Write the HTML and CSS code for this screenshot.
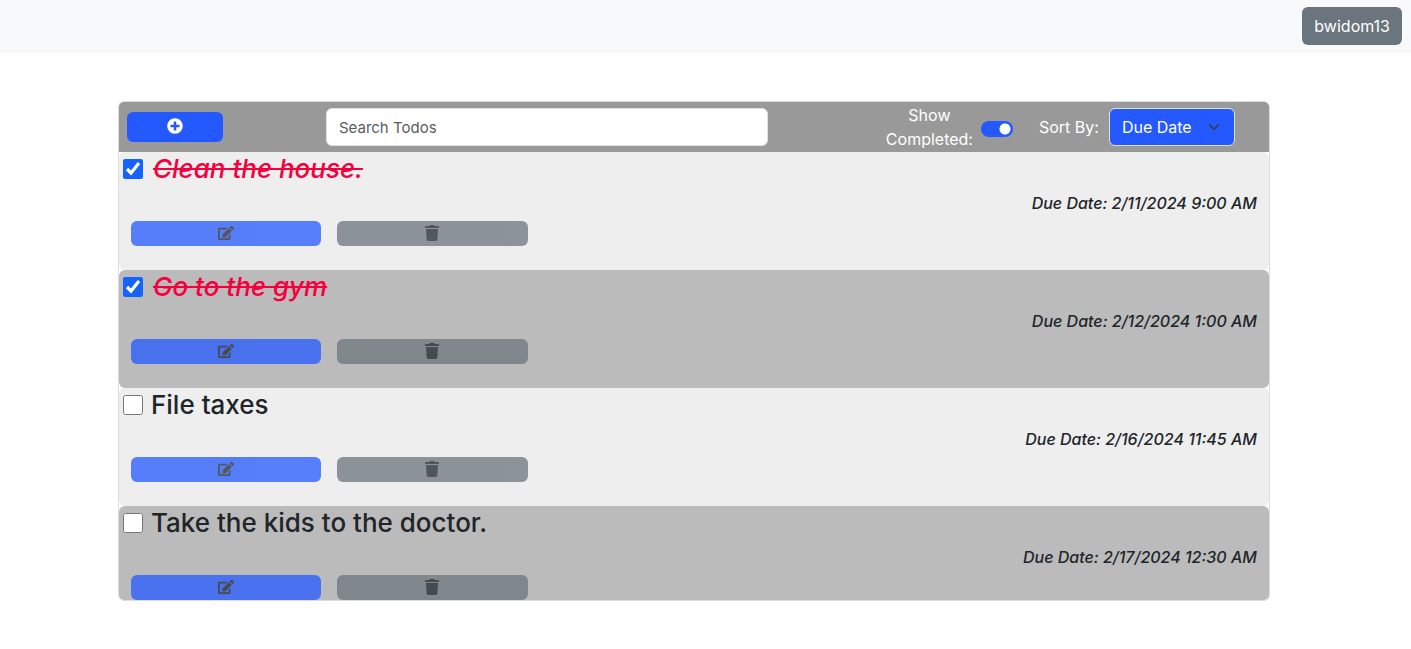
FILE: index.html
```
<!DOCTYPE html>
<html lang="en">
<head>
<meta charset="utf-8">
<meta name="viewport" content="width=device-width, initial-scale=1">
<title>Todos</title>
<link rel="stylesheet" href="styles.css">
</head>
<body>
<svg class="sprite" aria-hidden="true">
  <symbol id="icon-edit" viewBox="0 0 576 512"><path d="M402.600 83.200l90.200 90.200c3.800 3.800 3.800 10 0 13.800L274.400 405.600l-92.800 10.300c-12.400 1.400-22.900-9.100-21.500-21.500l10.300-92.800L388.800 83.200c3.800-3.800 10-3.800 13.800 0zm162-22.900l-48.800-48.800c-15.200-15.200-39.900-15.200-55.200 0l-35.400 35.400c-3.800 3.800-3.800 10 0 13.800l90.200 90.200c3.800 3.800 10 3.800 13.800 0l35.400-35.400c15.200-15.300 15.200-40 0-55.200zM384 346.200V448H64V128h229.800c3.200 0 6.200-1.300 8.500-3.500l40-40c7.600-7.600 2.200-20.500-8.500-20.500H48C21.500 64 0 85.500 0 112v352c0 26.500 21.500 48 48 48h352c26.500 0 48-21.500 48-48V306.200c0-10.700-12.900-16-20.500-8.500l-40 40c-2.200 2.300-3.500 5.300-3.500 8.500z"/></symbol>
  <symbol id="icon-trash" viewBox="0 0 448 512"><path d="M432 32H312l-9.400-18.700A24 24 0 0 0 281.100 0H166.800a23.700 23.700 0 0 0-21.400 13.300L136 32H16A16 16 0 0 0 0 48v32a16 16 0 0 0 16 16h416a16 16 0 0 0 16-16V48a16 16 0 0 0-16-16zM53.200 467a48 48 0 0 0 47.900 45h245.800a48 48 0 0 0 47.900-45L416 128H32z"/></symbol>
  <symbol id="icon-plus" viewBox="0 0 512 512"><path d="M256 8C119 8 8 119 8 256s111 248 248 248 248-111 248-248S393 8 256 8zm144 276c0 6.600-5.400 12-12 12h-92v92c0 6.600-5.400 12-12 12h-56c-6.600 0-12-5.400-12-12v-92h-92c-6.600 0-12-5.400-12-12v-56c0-6.600 5.400-12 12-12h92v-92c0-6.600 5.400-12 12-12h56c6.600 0 12 5.400 12 12v92h92c6.600 0 12 5.400 12 12v56z"/></symbol>
</svg>

<nav class="navbar">
  <button class="user-button" type="button">bwidom13</button>
</nav>

<main class="card">
  <header class="toolbar">
    <button class="add-button" type="button" aria-label="Add todo"><svg class="icon"><use href="#icon-plus"/></svg></button>
    <input class="search" type="text" placeholder="Search Todos" aria-label="Search Todos">
    <div class="filters">
      <label class="show-label" for="show">Show Completed:</label>
      <input class="switch" id="show" type="checkbox" role="switch" checked>
      <label class="sort-label" for="sort">Sort By:</label>
      <select class="sort" id="sort"><option>Due Date</option></select>
    </div>
  </header>

  <ul class="todos">
    <li class="todo">
      <div class="todo-head">
        <input class="check" type="checkbox" id="t1" checked>
        <label class="title done" for="t1">Clean the house.</label>
      </div>
      <p class="due">Due Date: 2/11/2024 9:00 AM</p>
      <div class="actions">
        <button class="action edit" type="button" aria-label="Edit"><svg class="icon"><use href="#icon-edit"/></svg></button>
        <button class="action delete" type="button" aria-label="Delete"><svg class="icon"><use href="#icon-trash"/></svg></button>
      </div>
    </li>
    <li class="todo">
      <div class="todo-head">
        <input class="check" type="checkbox" id="t2" checked>
        <label class="title done" for="t2">Go to the gym</label>
      </div>
      <p class="due">Due Date: 2/12/2024 1:00 AM</p>
      <div class="actions">
        <button class="action edit" type="button" aria-label="Edit"><svg class="icon"><use href="#icon-edit"/></svg></button>
        <button class="action delete" type="button" aria-label="Delete"><svg class="icon"><use href="#icon-trash"/></svg></button>
      </div>
    </li>
    <li class="todo">
      <div class="todo-head">
        <input class="check" type="checkbox" id="t3">
        <label class="title" for="t3">File taxes</label>
      </div>
      <p class="due">Due Date: 2/16/2024 11:45 AM</p>
      <div class="actions">
        <button class="action edit" type="button" aria-label="Edit"><svg class="icon"><use href="#icon-edit"/></svg></button>
        <button class="action delete" type="button" aria-label="Delete"><svg class="icon"><use href="#icon-trash"/></svg></button>
      </div>
    </li>
    <li class="todo">
      <div class="todo-head">
        <input class="check" type="checkbox" id="t4">
        <label class="title" for="t4">Take the kids to the doctor.</label>
      </div>
      <p class="due">Due Date: 2/17/2024 12:30 AM</p>
      <div class="actions">
        <button class="action edit" type="button" aria-label="Edit"><svg class="icon"><use href="#icon-edit"/></svg></button>
        <button class="action delete" type="button" aria-label="Delete"><svg class="icon"><use href="#icon-trash"/></svg></button>
      </div>
    </li>
  </ul>
</main>
</body>
</html>
```
FILE: styles.css
```
* {
  box-sizing: border-box;
}

body {
  margin: 0;
  background: #fff;
  color: #212529;
  font: 16px/24px Inter, sans-serif;
}

button,
input,
select {
  margin: 0;
  font: inherit;
}

.sprite {
  display: none;
}

.icon {
  width: 16px;
  height: 16px;
  fill: currentColor;
}

.navbar {
  display: flex;
  justify-content: flex-end;
  padding: 7px 9px 8px;
  background: #f8f9fb;
}

.user-button {
  padding: 7px 12px;
  border: 0;
  border-radius: 6px;
  background: #6b757d;
  color: #fff;
}

.card {
  max-height: 500px;
  margin: 48px 10% 0 118px;
  border: 1px solid #dcdde0;
  border-radius: 6px;
  overflow: auto;
  scrollbar-width: none;
}

.toolbar {
  display: grid;
  grid-template-columns: 207fr 442fr 467fr;
  align-items: center;
  min-height: 50px;
  padding: 0 34px 0 0;
  background: #999;
  color: #fff;
}

.add-button {
  display: flex;
  align-items: center;
  justify-content: center;
  width: 96px;
  height: 30px;
  margin-left: 8px;
  padding: 0 0 2px;
  border: 0;
  border-radius: 6px;
  background: #2459ff;
  color: #fff;
}

.search {
  width: 100%;
  height: 38px;
  padding: 0 12px;
  border: 1px solid #dee2e6;
  border-radius: 6px;
  background: #fff;
  color: #212529;
  font-size: 15px;
}

.search::placeholder {
  color: #595c5f;
  opacity: 1;
}

.filters {
  display: flex;
  align-items: center;
  justify-content: flex-end;
}

.show-label {
  width: min-content;
  text-align: center;
}

.switch {
  appearance: none;
  width: 32px;
  height: 16px;
  margin: 4px 26px 0 8px;
  border-radius: 8px;
  background: radial-gradient(circle at 24px 8px, #fff 5px, transparent 6px) #2459ff;
}

.sort {
  appearance: none;
  width: 126px;
  height: 38px;
  margin-left: 10px;
  padding: 0 36px 0 12px;
  border: 1px solid #dee2e6;
  border-radius: 6px;
  background: #2459ff url("data:image/svg+xml,%3Csvg xmlns='http://www.w3.org/2000/svg' viewBox='0 0 16 16'%3E%3Cpath fill='none' stroke='%23343a40' stroke-linecap='round' stroke-linejoin='round' stroke-width='2' d='m2 5 6 6 6-6'/%3E%3C/svg%3E") no-repeat right 14px center / 12px;
  color: #fff;
}

.todos {
  margin: 0;
  padding: 0;
  list-style: none;
}

.todo {
  padding-bottom: 24px;
  border-radius: 6px;
  background: #eee;
}

.todo:nth-child(even) {
  background: #bbb;
}

.todo-head {
  display: flex;
  align-items: center;
  gap: 8px;
  padding-left: 4px;
}

.check {
  width: 20px;
  height: 20px;
  accent-color: #1463ff;
}

.title {
  font-size: 26px;
  font-weight: 500;
  line-height: 34px;
}

.done {
  padding-left: 2px;
  color: #f5003d;
  font-style: italic;
  text-decoration: line-through;
}

.due {
  margin: 5px 12px 6px;
  font-style: italic;
  font-weight: 500;
  text-align: right;
}

.actions {
  display: flex;
  gap: 16px;
  padding: 0 12px;
}

.action {
  display: flex;
  align-items: center;
  justify-content: center;
  width: 16.9%;
  height: 25px;
  padding: 0 0 2px;
  border: 0;
  border-radius: 6px;
  color: #212529;
  opacity: 0.75;
}

.edit {
  background: #2459ff;
}

.delete {
  background: #6b757d;
}
```
